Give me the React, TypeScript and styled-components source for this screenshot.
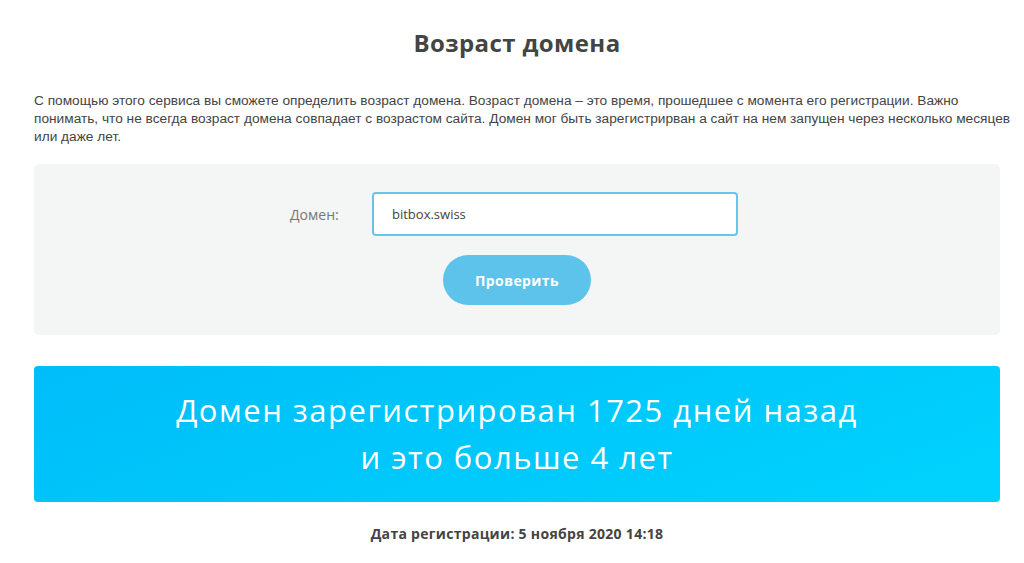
import styled, { createGlobalStyle } from "styled-components"

const GlobalStyle = createGlobalStyle`
    body {
        margin: 0;
        background: #ffffff;
        font-family: "Open Sans", "Noto Sans", sans-serif;
        color: #444444;
    }
`

const Page = styled.div`
    width: 966px;
    margin-left: 34px;
    padding-top: 26px;
    display: flex;
    flex-direction: column;
`

const Title = styled.h1`
    margin: 0;
    text-align: center;
    font-size: 24px;
    line-height: 34px;
    font-weight: 700;
    letter-spacing: 0.4px;
    color: #444444;
`

const Intro = styled.p`
    margin: 32px 0 0 0;
    font-family: "Liberation Sans", Arial, sans-serif;
    font-size: 13.7px;
    line-height: 18px;
    white-space: nowrap;
    color: #444444;
`

const Panel = styled.div`
    margin-top: 18px;
    background: #f4f5f5;
    border-radius: 5px;
    height: 171px;
    display: flex;
    flex-direction: column;
    align-items: center;
    padding-top: 28px;
    box-sizing: border-box;
`

const Row = styled.div`
    display: flex;
    align-items: center;
    margin-right: 6px;
`

const Label = styled.label`
    width: 82px;
    font-size: 14px;
    color: #777777;
`

const Input = styled.input`
    width: 366px;
    height: 44px;
    box-sizing: border-box;
    border: 2px solid #68c4ea;
    border-radius: 4px;
    background: #ffffff;
    padding: 0 18px;
    font-family: "Open Sans", "Noto Sans", sans-serif;
    font-size: 13px;
    color: #444444;
    outline: none;
`

const Button = styled.button`
    margin-top: 19px;
    width: 148px;
    height: 50px;
    border: none;
    border-radius: 25px;
    background: #5ec3ea;
    color: #ffffff;
    font-family: "Open Sans", "Noto Sans", sans-serif;
    font-weight: 700;
    font-size: 14px;
    letter-spacing: 0.4px;
    cursor: pointer;
`

const Result = styled.div`
    margin-top: 31px;
    height: 136px;
    border-radius: 4px;
    background: linear-gradient(160deg, #00bdf9 0%, #00d3fd 100%);
    display: flex;
    flex-direction: column;
    align-items: center;
    justify-content: center;
    color: #ffffff;
    font-size: 31px;
    line-height: 47px;
    letter-spacing: 1.5px;
    font-weight: 400;
    text-align: center;
`

const DateLine = styled.div`
    margin-top: 22px;
    text-align: center;
    font-size: 14px;
    font-weight: 700;
    letter-spacing: 0.3px;
    color: #444444;
`

const App = () => {
    return (
        <>
            <GlobalStyle />
            <Page>
                <Title>Возраст домена</Title>
                <Intro>
                    С помощью этого сервиса вы сможете определить возраст домена. Возраст домена – это время, прошедшее с момента его регистрации. Важно
                    <br />
                    понимать, что не всегда возраст домена совпадает с возрастом сайта. Домен мог быть зарегистрирван а сайт на нем запущен через несколько месяцев
                    <br />
                    или даже лет.
                </Intro>
                <Panel>
                    <Row>
                        <Label htmlFor="domain">Домен:</Label>
                        <Input id="domain" type="text" defaultValue="bitbox.swiss" />
                    </Row>
                    <Button type="button">Проверить</Button>
                </Panel>
                <Result>
                    <span>Домен зарегистрирован 1725 дней назад</span>
                    <span>и это больше 4 лет</span>
                </Result>
                <DateLine>Дата регистрации: 5 ноября 2020 14:18</DateLine>
            </Page>
        </>
    )
}

export default App
